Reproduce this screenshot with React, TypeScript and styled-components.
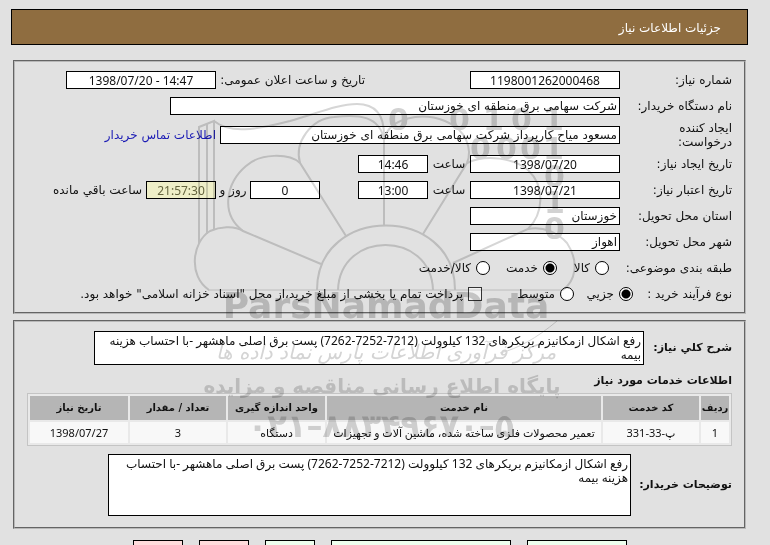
import React from "react";
import styled, { createGlobalStyle } from "styled-components";

const GlobalStyle = createGlobalStyle`
  * { box-sizing: border-box; }
  body {
    margin: 0;
    background: #e1e1e1;
    color: #111;
    font-family: "DejaVu Sans", sans-serif;
    font-size: 12px;
    line-height: 14px;
  }
  input, textarea, button { font: inherit; color: inherit; }
`;

const Page = styled.main`
  position: relative;
  height: 100vh;
  overflow: hidden;
  padding: 9px 22px 0 11px;
`;

const TitleBar = styled.h1`
  display: flex;
  align-items: center;
  height: 36px;
  margin: 0 0 15px;
  padding: 2px 26px 0;
  border: 1px solid #000;
  background: #8f6d40;
  color: #fff;
  font-size: 12px;
  font-weight: normal;
`;

const Panel = styled.section<{ $kind: "form" | "details" }>`
  margin: 0 2px 6px;
  padding: ${(p) => (p.$kind === "form" ? "5px 12px" : "9px 12px 11px")};
  border: 2px groove #b8b8b8;
`;

const Row = styled.div<{ $tall?: boolean }>`
  display: flex;
  align-items: center;
  height: ${(p) => (p.$tall ? 32 : 26)}px;
  white-space: nowrap;
`;

const Label = styled.label<{ $w?: number }>`
  flex: none;
  width: ${(p) => p.$w ?? 112}px;
`;

const NarrowLabel = styled(Label)`
  padding-inline-end: 30px;
  white-space: normal;
`;

const Unit = styled.span<{ $w: number }>`
  flex: none;
  width: ${(p) => p.$w}px;
  text-align: center;
`;

const Gap = styled.span<{ $w: number }>`
  flex: 0 1 ${(p) => p.$w}px;
`;

const Field = styled.input<{ $w: number; $text?: boolean; $timer?: boolean }>`
  width: ${(p) => p.$w}px;
  height: 18px;
  padding: 0 2px;
  border: 1px solid #000;
  border-radius: 0;
  outline: 0;
  background: ${(p) => (p.$timer ? "#efefc8" : "#fff")};
  color: ${(p) => (p.$timer ? "#666640" : "#111")};
  font-family: ${(p) => (p.$text ? "" : '"Noto Sans", ')}"DejaVu Sans", sans-serif;
  text-align: ${(p) => (p.$text ? "right" : "center")};
`;

const ContactLink = styled.a`
  margin-inline-start: 4px;
  color: #1a1ab4;
  text-decoration: none;
`;

const Choices = styled.div`
  display: flex;
  align-items: center;
`;

const Choice = styled.label<{ $w?: number }>`
  display: flex;
  align-items: center;
  gap: 5px;
  width: ${(p) => (p.$w ? p.$w + "px" : "auto")};
`;

const Radio = styled.input`
  appearance: none;
  flex: none;
  width: 14px;
  height: 14px;
  margin: 0;
  border: 1px solid #000;
  border-radius: 50%;
  background: #fff;
  &:checked { background: radial-gradient(circle, #000 4px, #fff 5px); }
`;

const Check = styled.input`
  appearance: none;
  flex: none;
  width: 14px;
  height: 14px;
  margin: 0;
  border: 1px solid #333;
  background: #f2f2f2;
`;

const NoteRow = styled.div<{ $inset: number }>`
  display: flex;
  align-items: center;
  padding-inline-end: ${(p) => p.$inset}px;
`;

const NoteLabel = styled.label<{ $w: number }>`
  flex: none;
  width: ${(p) => p.$w}px;
  font-size: 11px;
  font-weight: bold;
`;

const Note = styled.textarea<{ $h: number }>`
  display: block;
  flex: 1;
  min-width: 0;
  height: ${(p) => p.$h}px;
  margin: 0;
  padding: 2px 2px 0;
  border: 1px solid #000;
  border-radius: 0;
  background: #fff;
  font-family: "Noto Sans", "DejaVu Sans", sans-serif;
  resize: none;
  overflow: hidden;
  outline: 0;
`;

const SectionTitle = styled.h2`
  margin: 9px 0 5px;
  font-size: 11px;
  line-height: 14px;
`;

const Table = styled.table`
  width: 100%;
  margin-bottom: 8px;
  border: 1px solid #c4c4c4;
  border-collapse: separate;
  border-spacing: 2px;
  table-layout: fixed;
  background: #e9e9e9;
  text-align: center;
  white-space: nowrap;
`;

const Th = styled.th`
  height: 24px;
  padding: 0;
  background: #b5b5b5;
  font-size: 10px;
`;

const Td = styled.td`
  height: 21px;
  padding: 0;
  background: #f8f8f8;
  font-family: "Noto Sans", "DejaVu Sans", sans-serif;
  font-size: 11px;
`;

const Actions = styled.div`
  display: flex;
  gap: 16px;
  margin-top: 11px;
  padding-inline-start: 121px;
`;

const Action = styled.button<{ $w: number; $red?: boolean }>`
  width: ${(p) => p.$w}px;
  height: 25px;
  border: 1px solid #000;
  background: ${(p) => (p.$red ? "#ffdcdc" : "#eeffee")};
`;

const Overlay = styled.svg`
  position: absolute;
  top: 95px;
  left: calc(50% - 195px);
  width: 390px;
  height: 350px;
  pointer-events: none;
  mix-blend-mode: multiply;
`;

const Watermark = () => (
  <Overlay viewBox="190 95 390 350" aria-hidden="true" direction="ltr">
    <g fill="none" stroke="#d6d6d6" strokeWidth="2">
      <path d="M199 244V127L214 121V230M207 234V124" />
      <path d="M214 121C230 134 255 130 290 121C318 113 338 104 357 104C377 104 384 117 384 135V226" />
      <path d="M321 264L243 231C234 225 219 227 210 231C192 242 188 276 209 290" />
      <path d="M346 236L300 163C289 153 260 153 246 166C226 183 220 214 243 231" />
      <path d="M300 163C294 142 311 119 334 117C359 114 380 116 384 140" />
      <path d="M384 140C389 117 422 112 445 121C468 130 472 151 467 163L423 234" />
      <path d="M467 163C486 154 514 158 528 170C546 187 543 214 528 229L453 263" />
      <path d="M528 229C544 226 558 233 567 243C580 263 575 281 563 290" />
      <path d="M317 290C317 204 455 204 455 290M338 290C340 230 431 230 433 290" />
      <path d="M208 290H563" strokeWidth="1" />
      <path d="M557 321C537 338 517 349 500 353" strokeWidth="1" />
    </g>
    <g fill="#d2d2d2" fontFamily="DejaVu Sans" fontWeight="bold" fontSize="30">
      <text x="388" y="130">0</text>
      <text x="449" y="130">0</text>
      <text x="483" y="130">1</text>
      <text x="511" y="130">0</text>
      <text x="543" y="130">1</text>
      <text x="470" y="159">0</text>
      <text x="496" y="159">0</text>
      <text x="520" y="159">0</text>
      <text x="543" y="159">1</text>
      <text x="544" y="187">0</text>
      <text x="544" y="213">1</text>
      <text x="544" y="239">0</text>
    </g>
    <g fill="#d4d4d4" fontFamily="DejaVu Sans" textAnchor="middle">
      <text x="386" y="318" fontSize="36" fontWeight="bold" fill="#cfcfcf">ParsNamadData</text>
      <text x="386" y="359" fontSize="20" fontStyle="italic">مرکز فرآوری اطلاعات پارس نماد داده ها</text>
      <text x="382" y="393" fontSize="20" fontWeight="bold">پایگاه اطلاع رسانی مناقصه و مزایده</text>
      <text x="381" y="437" fontSize="32" fontWeight="bold" style={{ unicodeBidi: "bidi-override" }}>۰۲۱–۸۸۳۴۹۶۷۰–۵</text>
    </g>
  </Overlay>
);

const summary =
  "رفع اشکال ازمکانیزم بریکرهای 132 کیلوولت (7212-7252-7262) پست برق اصلی ماهشهر -با احتساب هزینه بیمه";

const columns: { title: string; width?: number; value: string }[] = [
  { title: "ردیف", width: 28, value: "1" },
  { title: "کد خدمت", width: 96, value: "پ-33-331" },
  { title: "نام خدمت", value: "تعمیر محصولات فلزی ساخته شده، ماشین آلات و تجهیزات" },
  { title: "واحد اندازه گیری", width: 97, value: "دستگاه" },
  { title: "تعداد / مقدار", width: 96, value: "3" },
  { title: "تاریخ نیاز", width: 98, value: "1398/07/27" },
];

export default function App() {
  return (
    <Page dir="rtl" lang="fa">
      <GlobalStyle />
      <TitleBar>جزئیات اطلاعات نیاز</TitleBar>

      <Panel $kind="form">
        <Row>
          <Label htmlFor="number">شماره نیاز:</Label>
          <Field id="number" $w={150} readOnly dir="ltr" value="1198001262000468" />
          <Gap $w={105} />
          <Label $w={149} htmlFor="announced">تاریخ و ساعت اعلان عمومی:</Label>
          <Field id="announced" $w={150} readOnly dir="ltr" value="1398/07/20 - 14:47" />
        </Row>
        <Row>
          <Label htmlFor="buyer">نام دستگاه خریدار:</Label>
          <Field id="buyer" $w={450} $text readOnly value="شرکت سهامی برق منطقه ای خوزستان" />
        </Row>
        <Row $tall>
          <NarrowLabel htmlFor="creator">ایجاد کننده درخواست:</NarrowLabel>
          <Field id="creator" $w={400} $text readOnly value="مسعود میاح کارپرداز شرکت سهامی برق منطقه ای خوزستان" />
          <ContactLink href="#contact">اطلاعات تماس خریدار</ContactLink>
        </Row>
        <Row>
          <Label htmlFor="created">تاریخ ایجاد نیاز:</Label>
          <Field id="created" $w={150} readOnly dir="ltr" value="1398/07/20" />
          <Unit $w={42}>ساعت</Unit>
          <Field aria-label="ساعت" $w={70} readOnly dir="ltr" value="14:46" />
        </Row>
        <Row>
          <Label htmlFor="valid">تاریخ اعتبار نیاز:</Label>
          <Field id="valid" $w={150} readOnly dir="ltr" value="1398/07/21" />
          <Unit $w={42}>ساعت</Unit>
          <Field aria-label="ساعت" $w={70} readOnly dir="ltr" value="13:00" />
          <Gap $w={38} />
          <Field aria-label="روز" $w={70} readOnly value="0" />
          <Unit $w={34}>روز و</Unit>
          <Field id="left" $w={70} $timer readOnly dir="ltr" value="21:57:30" />
          <Gap $w={4} />
          <Label $w={92} htmlFor="left">ساعت باقي مانده</Label>
        </Row>
        <Row>
          <Label htmlFor="province">استان محل تحویل:</Label>
          <Field id="province" $w={150} $text readOnly value="خوزستان" />
        </Row>
        <Row>
          <Label htmlFor="city">شهر محل تحویل:</Label>
          <Field id="city" $w={150} $text readOnly value="اهواز" />
        </Row>
        <Row>
          <Label as="span" $w={123}>طبقه بندی موضوعی:</Label>
          <Choices role="radiogroup" aria-label="طبقه بندی موضوعی">
            <Choice $w={52}><Radio type="radio" name="category" />کالا</Choice>
            <Choice $w={67}><Radio type="radio" name="category" defaultChecked />خدمت</Choice>
            <Choice><Radio type="radio" name="category" />کالا/خدمت</Choice>
          </Choices>
        </Row>
        <Row>
          <Label as="span" $w={99}>نوع فرآیند خرید :</Label>
          <Choices role="radiogroup" aria-label="نوع فرآیند خرید">
            <Choice $w={59}><Radio type="radio" name="process" defaultChecked />جزیي</Choice>
            <Choice $w={92}><Radio type="radio" name="process" />متوسط</Choice>
          </Choices>
          <Choice><Check type="checkbox" />پرداخت تمام یا بخشی از مبلغ خرید،از محل "اسناد خزانه اسلامی" خواهد بود.</Choice>
        </Row>
      </Panel>

      <Panel $kind="details">
        <NoteRow $inset={67}>
          <NoteLabel $w={88} htmlFor="summary">شرح کلي نیاز:</NoteLabel>
          <Note id="summary" $h={34} readOnly value={summary} />
        </NoteRow>
        <SectionTitle>اطلاعات خدمات مورد نیاز</SectionTitle>
        <Table>
          <colgroup>
            {columns.map((c) => <col key={c.title} width={c.width} />)}
          </colgroup>
          <thead>
            <tr>{columns.map((c) => <Th key={c.title} scope="col">{c.title}</Th>)}</tr>
          </thead>
          <tbody>
            <tr>{columns.map((c) => <Td key={c.title}>{c.value}</Td>)}</tr>
          </tbody>
        </Table>
        <NoteRow $inset={81}>
          <NoteLabel $w={101} htmlFor="notes">توضیحات خریدار:</NoteLabel>
          <Note id="notes" $h={62} readOnly value={summary} />
        </NoteRow>
      </Panel>

      <Actions>
        <Action $w={100} type="button" />
        <Action $w={180} type="button" />
        <Action $w={50} type="button" />
        <Action $w={50} $red type="button" />
        <Action $w={50} $red type="button" />
      </Actions>
      <Watermark />
    </Page>
  );
}
